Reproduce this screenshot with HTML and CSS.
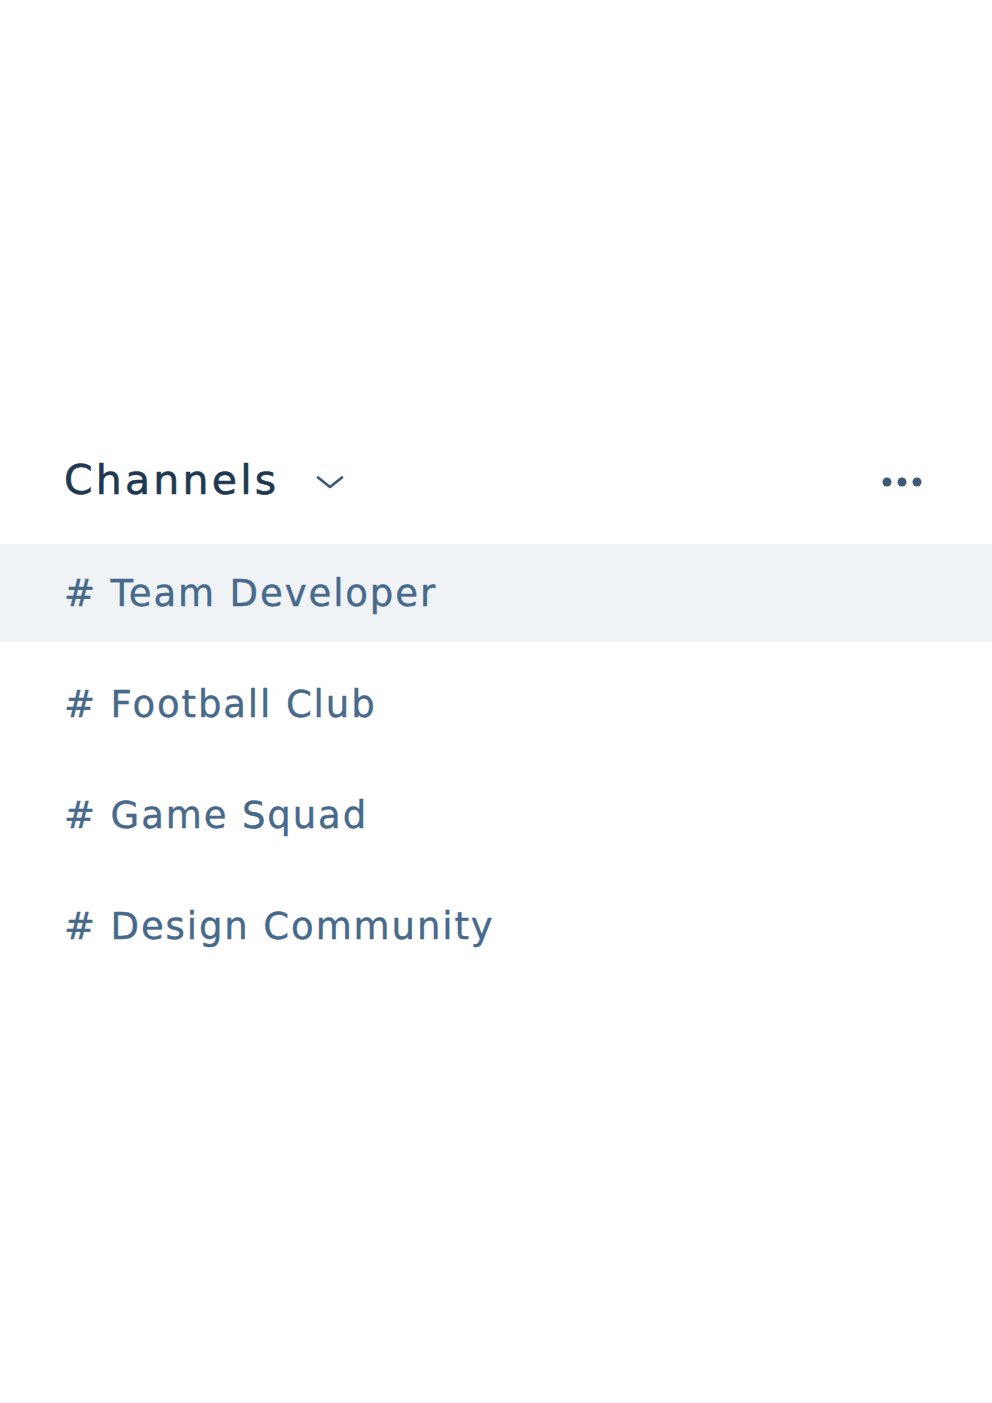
FILE: index.html
```html
<!DOCTYPE html>
<html>
<head>
<meta charset="utf-8">
<link rel="stylesheet" href="styles.css">
</head>
<body>
<div class="sidebar">
  <div class="header">
    <div class="title-group">
      <span class="title">Channels</span>
      <svg class="chevron" width="30" height="18" viewBox="0 0 30 18"><path d="M3 4.5 L15 14 L27 4.5" fill="none" stroke="#3d5a78" stroke-width="2.8" stroke-linecap="round" stroke-linejoin="round"/></svg>
    </div>
    <svg class="dots" width="40" height="10" viewBox="0 0 40 10"><circle cx="5" cy="5" r="4.5" fill="#3d5a78"/><circle cx="20" cy="5" r="4.5" fill="#3d5a78"/><circle cx="35" cy="5" r="4.5" fill="#3d5a78"/></svg>
  </div>
  <ul class="channels">
    <li class="channel active"># Team Developer</li>
    <li class="channel"># Football Club</li>
    <li class="channel"># Game Squad</li>
    <li class="channel"># Design Community</li>
  </ul>
</div>
</body>
</html>
```
FILE: styles.css
```css
html, body {
  margin: 0;
  padding: 0;
  background: #ffffff;
}
.sidebar {
  padding-top: 440px;
  font-family: "DejaVu Sans", "Noto Sans", sans-serif;
}
.header {
  height: 80px;
  display: flex;
  align-items: center;
  justify-content: space-between;
  padding: 0 70px 0 64px;
}
.title-group {
  display: flex;
  align-items: center;
  gap: 36px;
}
.title {
  font-size: 41px;
  color: #1f3852;
  letter-spacing: 3.2px;
  -webkit-text-stroke: 0.6px #1f3852;
}
.chevron {
  display: block;
  margin-top: 4px;
}
.dots {
  display: block;
  margin-top: 4px;
}
.channels {
  list-style: none;
  margin: 24px 0 0 0;
  padding: 0;
  display: flex;
  flex-direction: column;
  gap: 13px;
}
.channel {
  height: 98px;
  display: flex;
  align-items: center;
  padding-left: 64px;
  font-size: 37px;
  color: #47698a;
  letter-spacing: 1.9px;
  -webkit-text-stroke: 0.4px #47698a;
}
.channel.active {
  background: #eff3f6;
}
```
